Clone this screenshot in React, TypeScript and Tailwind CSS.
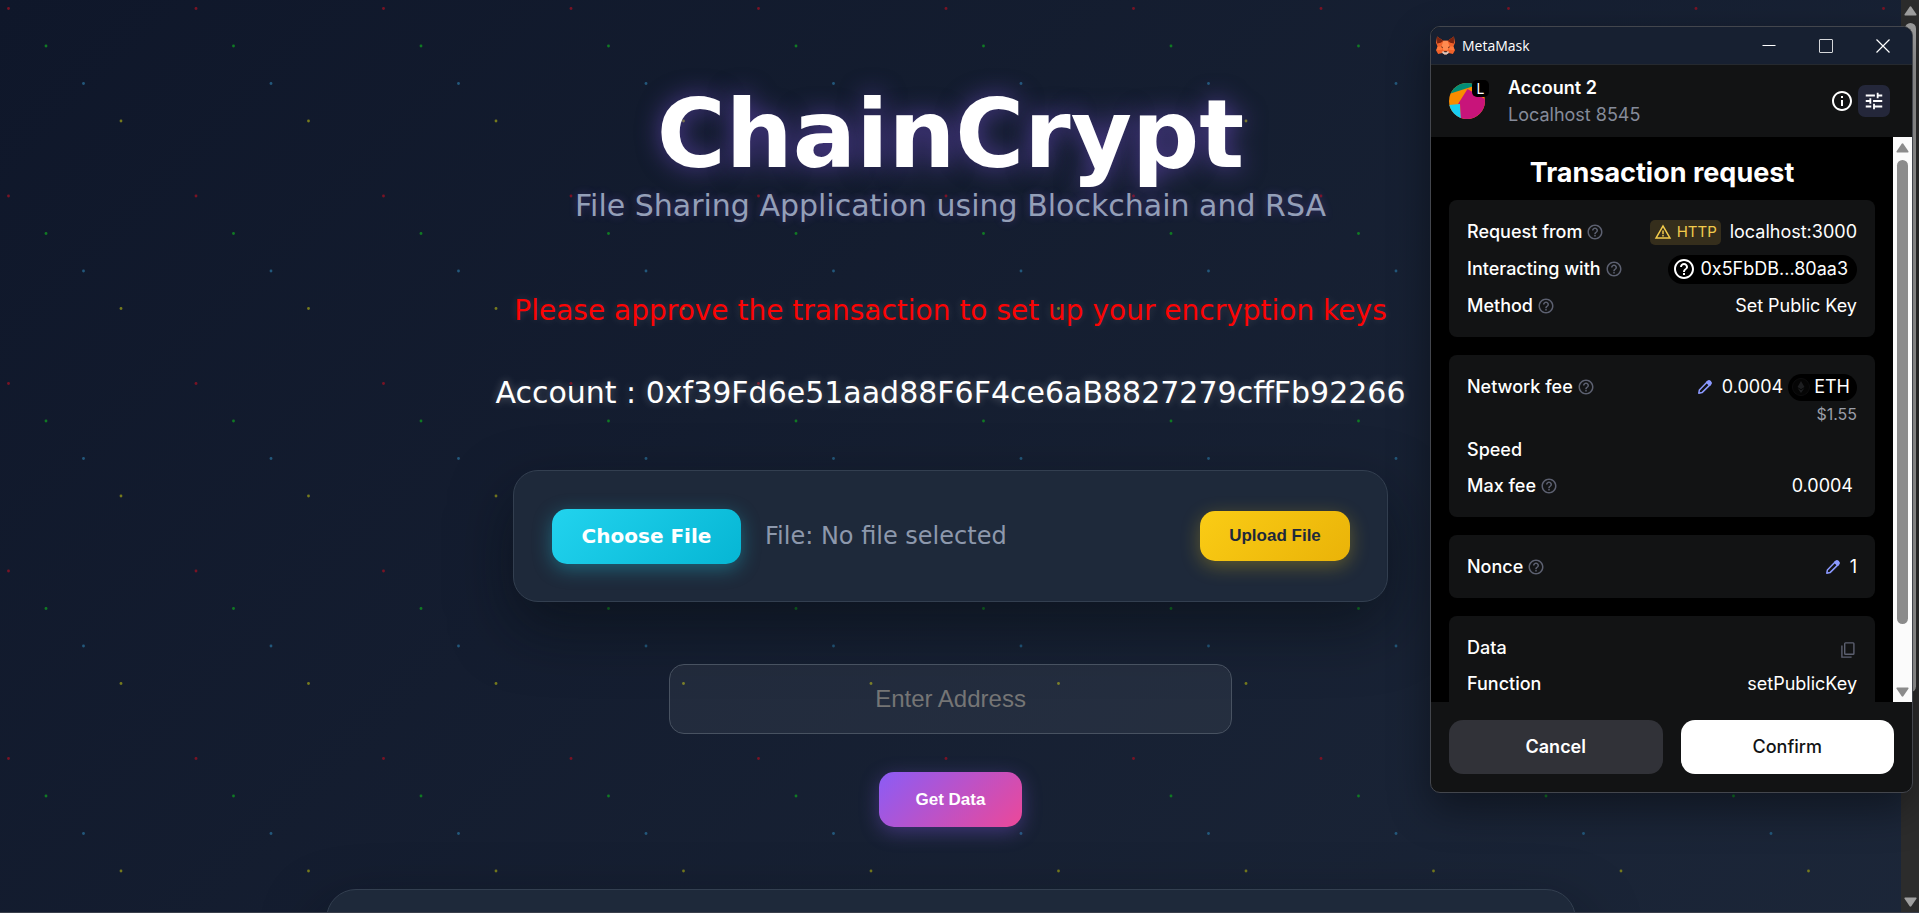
import React from 'react';
import { MdHelpOutline, MdInfoOutline, MdTune, MdWarningAmber } from 'react-icons/md';

const wide = "font-['DejaVu_Sans',Verdana,sans-serif]";

function DotField() {
  const dots = [
    { at: [8.5, 196], fill: '#7a1223' },
    { at: [46, 233.5], fill: '#0f7a22' },
    { at: [83.5, 271], fill: '#22587c' },
    { at: [121, 308.5], fill: '#757a1c' },
  ];
  return (
    <svg className="pointer-events-none absolute inset-0 h-full w-full" aria-hidden="true">
      <defs>
        <pattern id="dots" width="375" height="375" patternUnits="userSpaceOnUse">
          {dots.map((d) =>
            d.at.map((x) => d.at.map((y) => <circle key={`${x}-${y}`} cx={x} cy={y} r="1.4" fill={d.fill} />)),
          )}
        </pattern>
      </defs>
      <rect width="100%" height="100%" fill="url(#dots)" />
    </svg>
  );
}

function Fox() {
  return (
    <svg viewBox="0 0 36 36" className="size-[19px]" aria-hidden="true">
      <path d="M2 1 L14 9 L22 9 L34 1 L36 13 L33 20 L36 27 L32 34 L24 32 L20 35 L16 35 L12 32 L4 34 L0 27 L3 20 L0 13 Z" fill="#f0622a" />
      <path d="M2 1 L14 9 L9 13 L2 14 Z" fill="#7a2410" />
      <path d="M34 1 L22 9 L27 13 L34 14 Z" fill="#7a2410" />
      <path d="M14 9 H22 L25 18 L22 27 H14 L11 18 Z" fill="#ff8a50" />
      <path d="M3 20 L11 20 L12 26 L1 27 Z M33 20 L25 20 L24 26 L35 27 Z" fill="#ff7a3c" />
      <path d="M9 20 L13 21 L12 22.5 Z M27 20 L23 21 L24 22.5 Z" fill="#2b1a18" />
      <path d="M12 29 L16 30 H20 L24 29 L24 32 L20 35 H16 L12 32 Z" fill="#d9c7c0" />
      <path d="M15 29 H21 L20 31 H16 Z" fill="#1c1517" />
    </svg>
  );
}

function Avatar() {
  return (
    <svg viewBox="0 0 36 36" className="size-9" aria-hidden="true">
      <clipPath id="avatar-clip">
        <circle cx="18" cy="18" r="18" />
      </clipPath>
      <g clipPath="url(#avatar-clip)">
        <rect width="36" height="36" fill="#fa8c00" />
        <path d="M0 11 L25 3 L25 0 H0 Z" fill="#018e78" />
        <path d="M0 22 L11 21 L12 36 H0 Z" fill="#18cdf2" />
        <path d="M18.500 6 L36 16 V36 H12 L11 21 L9 21 Z" fill="#c8147a" />
      </g>
    </svg>
  );
}

function Pencil() {
  return (
    <svg viewBox="0 0 16 16" className="size-4 text-[#8b99ff]" fill="none" stroke="currentColor" strokeWidth="1.5" strokeLinejoin="round" aria-hidden="true">
      <path d="M1.8 14.2 L2.4 11 L10.6 2.6 Q12 1.4 13.3 2.6 Q14.6 4 13.4 5.4 L5 13.6 Z" />
      <path d="M9.8 3.4 L10.6 2.6 Q12 1.4 13.3 2.6 Q14.6 4 13.4 5.4 L12.6 6.2 Z" fill="currentColor" />
    </svg>
  );
}

function CopyIcon() {
  return (
    <svg viewBox="0 0 14 16" className="h-4 w-[14px] text-[#5c6070]" fill="none" stroke="currentColor" strokeWidth="1.4" aria-hidden="true">
      <rect x="3.7" y="0.9" width="9.2" height="11.4" rx="0.8" />
      <path d="M0.9 3.5 V15.1 H10.6" />
    </svg>
  );
}

function Triangle({ down = false, className }: { down?: boolean; className: string }) {
  return (
    <svg viewBox="0 0 13 10" className={`h-[10px] w-[13px] ${className}`} fill="currentColor" aria-hidden="true">
      <path d={down ? 'M1 0.5 H12 Q13 0.8 12.4 1.8 L7.3 9.3 Q6.5 10 5.7 9.3 L0.6 1.8 Q0 0.8 1 0.5 Z' : 'M1 9.5 H12 Q13 9.2 12.4 8.2 L7.3 0.7 Q6.5 0 5.7 0.7 L0.6 8.2 Q0 9.2 1 9.5 Z'} />
    </svg>
  );
}

function Row({ label, help = false, tall = false, children }: { label: string; help?: boolean; tall?: boolean; children?: React.ReactNode }) {
  return (
    <div className={`flex items-center justify-between ${tall ? 'h-[38px]' : 'h-9'}`}>
      <dt className="flex items-center gap-1 font-medium">
        {label}
        {help && <MdHelpOutline className="size-[18px] text-[#5c6070]" />}
      </dt>
      <dd className="flex items-center">{children}</dd>
    </div>
  );
}

function Card({ children }: { children: React.ReactNode }) {
  return <dl className="rounded-lg bg-[#121314] px-[18px] pt-[14px] pb-[13px]">{children}</dl>;
}

function MetaMaskWindow() {
  return (
    <aside className="absolute top-[26px] right-[6px] flex w-[483px] flex-col overflow-hidden rounded-[10px] border border-[#43464d] bg-[#121314] font-[Inter,sans-serif] text-[18px] leading-6 text-white shadow-[0_16px_40px_rgba(0,0,0,0.4)]">
      <div className="flex h-[38px] items-center border-b border-[#25292f] bg-[#172031] pr-px pl-[5px]">
        <Fox />
        <span className="ml-[7px] grow font-['Open_Sans',sans-serif] text-[14px] leading-5">MetaMask</span>
        <button aria-label="Minimize" className="flex h-full w-[57px] items-center justify-center">
          <svg viewBox="0 0 14 14" className="size-[14px]" stroke="#fff" aria-hidden="true"><path d="M0.5 6.5 H13.5" /></svg>
        </button>
        <button aria-label="Maximize" className="flex h-full w-[57px] items-center justify-center">
          <svg viewBox="0 0 14 14" className="size-[14px]" stroke="#d5d7da" fill="none" aria-hidden="true"><rect x="0.5" y="0.5" width="13" height="13" rx="0.5" /></svg>
        </button>
        <button aria-label="Close" className="flex h-full w-[57px] items-center justify-center">
          <svg viewBox="0 0 14 14" className="size-[14px]" stroke="#fff" strokeWidth="1.2" aria-hidden="true"><path d="M0.5 0.5 L13.5 13.5 M13.5 0.5 L0.5 13.5" /></svg>
        </button>
      </div>

      <header className="flex h-[72px] items-center px-[18px]">
        <div className="relative">
          <Avatar />
          <span className="absolute -top-[3px] -right-1 flex size-[17px] items-center justify-center rounded-[5px] bg-black text-[14px] leading-4">L</span>
        </div>
        <div className="ml-[23px] grow">
          <p className="leading-[27px] font-semibold">Account 2</p>
          <p className="leading-[27px] text-[#858b9a]">Localhost 8545</p>
        </div>
        <button aria-label="Account details" className="mr-1">
          <MdInfoOutline className="size-6" />
        </button>
        <button aria-label="Advanced details" className="mr-1 flex size-8 items-center justify-center rounded-[7px] bg-[#24273a]">
          <MdTune className="size-[22px]" />
        </button>
      </header>

      <div className="flex h-[565px] bg-black">
        <div className="h-full grow overflow-hidden px-[18px]">
          <h2 className="pt-[18px] pb-[9px] text-center text-[27px] leading-9 font-bold">Transaction request</h2>
          <div className="flex flex-col gap-[18px]">
            <Card>
              <Row label="Request from" help>
                <span className="mr-[9px] flex h-[25px] items-center gap-[5px] rounded-[5px] bg-[#352e1c] px-1 text-[15px] text-[#f2cb4c]">
                  <MdWarningAmber className="size-[18px]" />
                  HTTP
                </span>
                localhost:3000
              </Row>
              <Row label="Interacting with" help tall>
                <span className="flex h-[29px] items-center gap-1 rounded-full bg-black pr-[9px] pl-1">
                  <MdHelpOutline className="size-6" />
                  0x5FbDB...80aa3
                </span>
              </Row>
              <Row label="Method" help>Set Public Key</Row>
            </Card>
            <Card>
              <Row label="Network fee" help>
                <button aria-label="Edit network fee" className="mr-[9px]"><Pencil /></button>
                0.0004
                <span className="ml-[5px] flex h-[27px] items-center gap-1 rounded-full bg-black pr-[7px] pl-1">
                  <svg viewBox="0 0 18 18" className="size-[18px]" aria-hidden="true">
                    <circle cx="9" cy="9" r="8.5" fill="#050505" stroke="#0d0d0e" />
                    <path d="M9 3 L12.5 9 L9 11.2 L5.5 9 Z M9 12.2 L12.5 10 L9 15 L5.5 10 Z" fill="#1d1e20" />
                  </svg>
                  ETH
                </span>
              </Row>
              <dd className="mb-[9px] text-right text-[16px] leading-[18px] text-[#9a9ea8]">$1.55</dd>
              <Row label="Speed" />
              <Row label="Max fee" help><span className="pr-1">0.0004</span></Row>
            </Card>
            <Card>
              <Row label="Nonce" help>
                <button aria-label="Edit nonce" className="mr-[9px]"><Pencil /></button>
                1
              </Row>
            </Card>
            <Card>
              <Row label="Data">
                <button aria-label="Copy data" className="mt-1 mr-[2px]"><CopyIcon /></button>
              </Row>
              <Row label="Function">setPublicKey</Row>
            </Card>
          </div>
        </div>
        <div className="flex w-[19px] shrink-0 flex-col items-center justify-between bg-[#fbfbfb] pt-[6px] pb-[5px]">
          <Triangle className="text-[#8b8b8b]" />
          <div className="mt-[7px] w-[11px] grow rounded-full bg-[#8b8b8b]" />
          <Triangle down className="mt-[63px] text-[#8b8b8b]" />
        </div>
      </div>

      <footer className="grid grid-cols-2 gap-[18px] p-[18px]">
        <button className="h-[54px] rounded-[14px] bg-[#313238] font-semibold">Cancel</button>
        <button className="h-[54px] rounded-[14px] bg-white font-medium text-[#121314]">Confirm</button>
      </footer>
    </aside>
  );
}

export default function App() {
  return (
    <div className="relative flex h-screen overflow-hidden border-b border-[#3a3f4b] bg-linear-[135deg,#0f172a_0%,#1e293b_120%]">
      <DotField />
      <main className={`relative flex min-w-0 grow flex-col items-center text-center ${wide}`}>
        <h1 className="pt-[82px] text-[94px] leading-[106px] font-bold text-white [text-shadow:0_0_25px_rgba(139,92,246,0.5)]">ChainCrypt</h1>
        <p className="text-[30px] leading-9 text-[#949fb8] [text-shadow:0_0_8px_rgba(139,92,246,0.3)]">File Sharing Application using Blockchain and RSA</p>
        <p className="mt-[69px] text-[28px] leading-9 text-[#fb0404] [text-shadow:0_0_8px_rgba(255,255,255,0.15)]">Please approve the transaction to set up your encryption keys</p>
        <p className="mt-[46px] text-[30px] leading-9 text-white [text-shadow:0_0_8px_rgba(255,255,255,0.3)]">Account : 0xf39Fd6e51aad88F6F4ce6aB8827279cffFb92266</p>

        <form className="mt-[59px] flex h-[132px] w-full max-w-[875px] shrink-0 items-center rounded-[25px] border border-[#333f50] bg-[#1e293a] pr-[37px] pl-[38px] shadow-[0_25px_60px_rgba(5,12,15,0.5)]">
          <label htmlFor="file" className="flex h-[55px] w-[189px] cursor-pointer items-center justify-center rounded-[15px] bg-linear-[135deg,#22d3ee,#06b6d4] text-[20px] font-bold text-white shadow-[0_5px_19px_rgba(34,211,238,0.35)]">
            Choose File
          </label>
          <input id="file" type="file" className="sr-only" />
          <span className="ml-6 grow text-left text-[24px] leading-8 text-[#8d98ac]">File: No file selected</span>
          <button type="button" className="h-[50px] w-[150px] rounded-[15px] bg-linear-[135deg,#facc15,#eab308] font-['Liberation_Sans',Arial,sans-serif] text-[17px] font-bold text-[#1e293b] shadow-[0_5px_19px_rgba(250,204,21,0.3)]">
            Upload File
          </button>
        </form>

        <input
          type="text"
          aria-label="Address"
          placeholder="Enter Address"
          className="mt-[62px] h-[70px] w-full max-w-[563px] shrink-0 rounded-[15px] border border-[#485261] bg-white/6 text-center font-['Liberation_Sans',Arial,sans-serif] text-[24px] text-white placeholder:text-[#757575]"
        />
        <button className="mt-[38px] h-[55px] w-[143px] shrink-0 rounded-[15px] bg-linear-[135deg,#8b5cf6,#ec4899] font-['Liberation_Sans',Arial,sans-serif] text-[17px] font-bold text-white shadow-[0_5px_19px_rgba(139,92,246,0.35)]">
          Get Data
        </button>
        <section className="mt-[62px] h-[300px] w-full max-w-[1250px] shrink-0 rounded-[30px] border border-[#333f50] bg-[#1e293a] shadow-[0_25px_60px_rgba(5,12,15,0.5)]" />
      </main>

      <div className="relative flex w-[18px] shrink-0 flex-col items-center bg-[#2c2c2c] pt-[6px] pb-[5px]">
        <Triangle className="text-[#9f9f9f]" />
        <div className="mt-[7px] w-[11px] grow rounded-full bg-[#9f9f9f]" />
        <Triangle down className="mt-[205px] text-[#9f9f9f]" />
      </div>

      <MetaMaskWindow />
    </div>
  );
}
